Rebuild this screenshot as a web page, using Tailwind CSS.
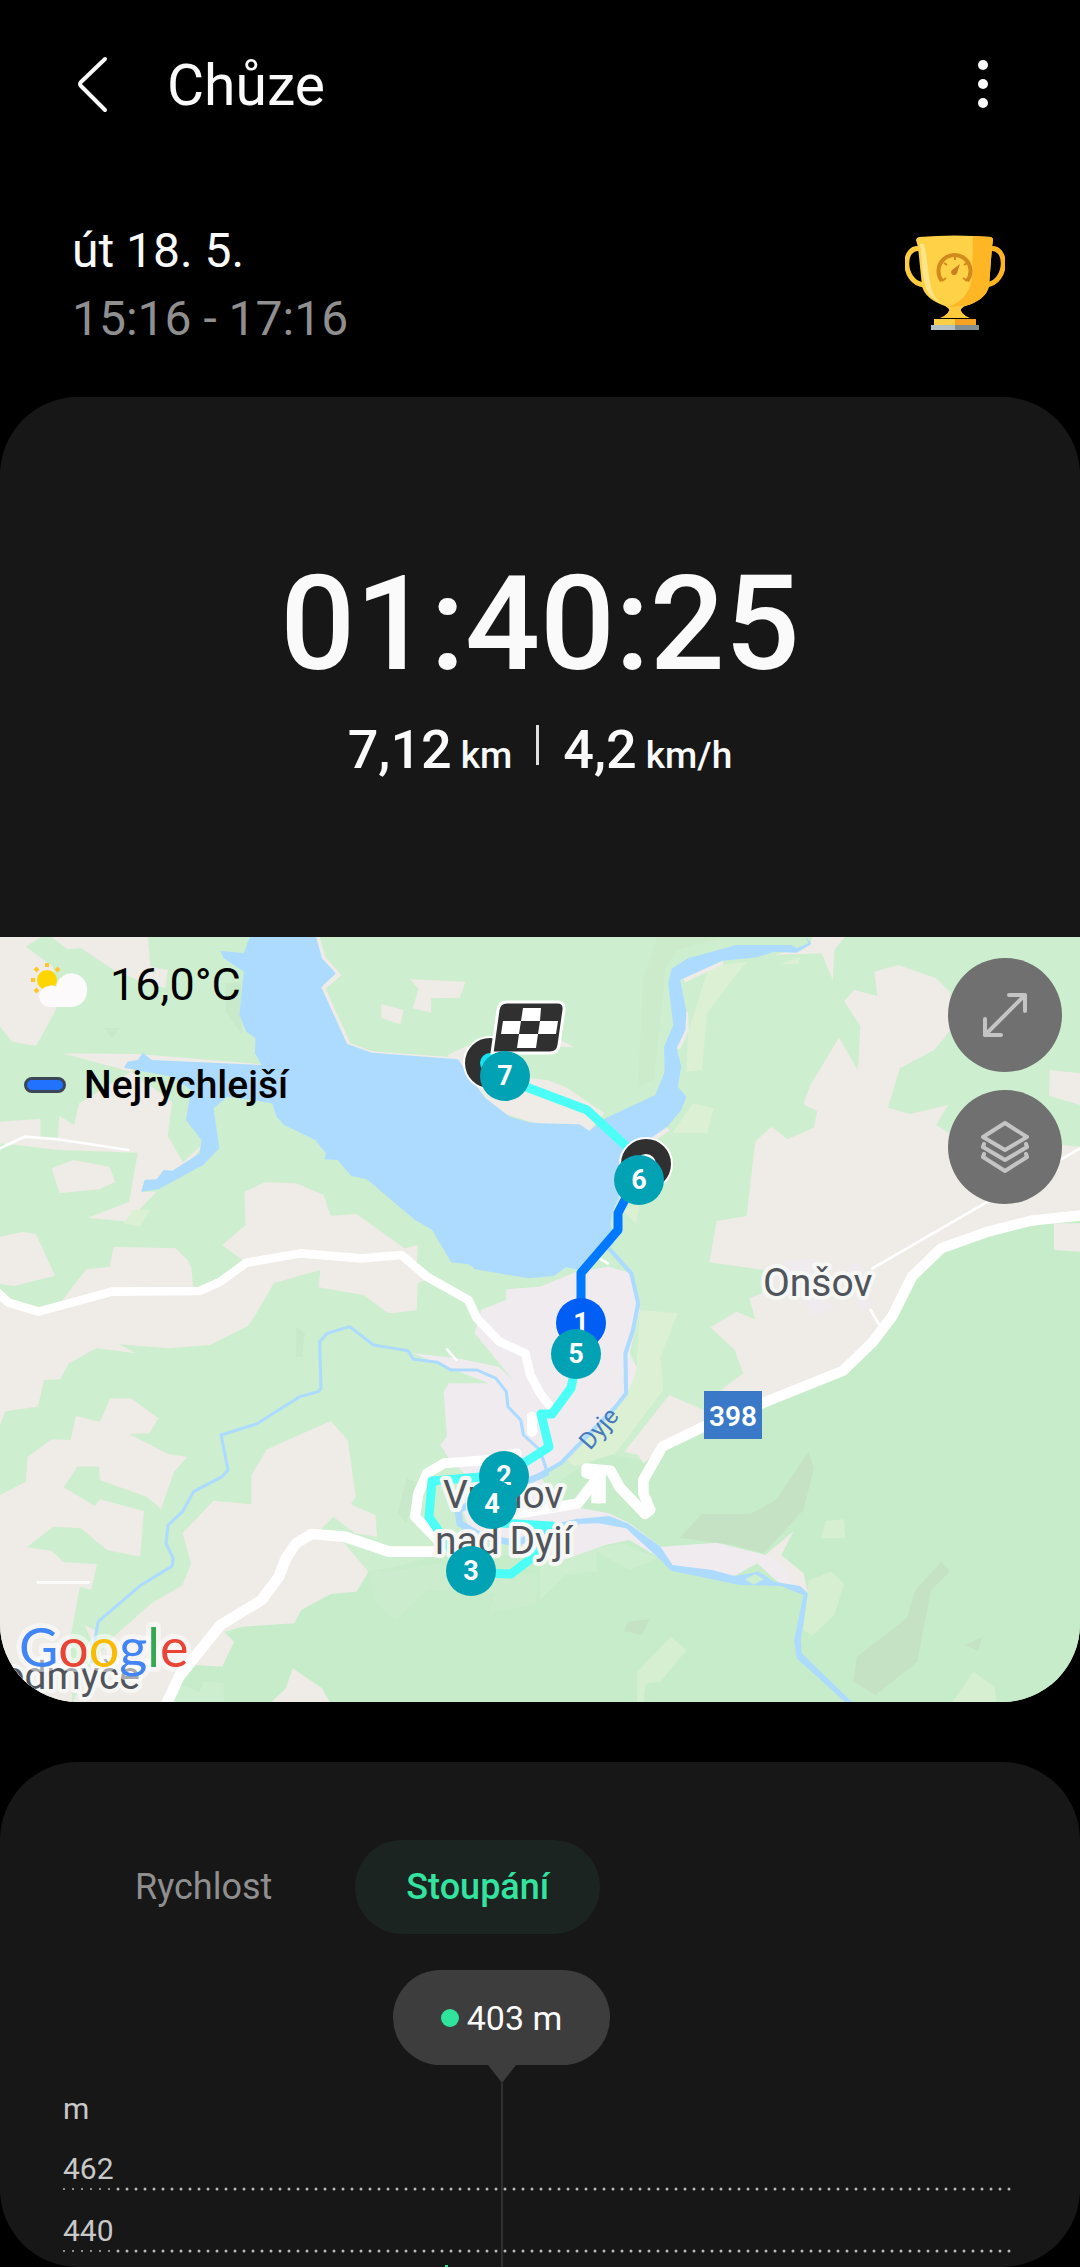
<!DOCTYPE html>
<html lang="cs">

<head>
    <meta charset="UTF-8" />
    <meta name="viewport" content="width=device-width, initial-scale=1.0" />
    <title>Chůze</title>
    <script src="https://cdn.jsdelivr.net/npm/@tailwindcss/browser@4"></script>
</head>

<body class="bg-black text-[#fafafa] font-['Roboto',sans-serif]">
    <!-- Header -->
    <header class="flex items-center h-[168px] pl-[73px] pr-[87px]">
        <button aria-label="Zpět" class="w-10 h-16">
            <svg viewBox="0 0 40 64" class="w-full h-full" fill="none" stroke="#fafafa" stroke-width="4" stroke-linecap="round" stroke-linejoin="round">
                <path d="M32 7 L8 30 Q6 32 8 34 L32 58" />
            </svg>
        </button>
        <h1 class="ml-[54px] pt-1 flex-1 text-[57px] leading-[64px]">Chůze</h1>
        <button aria-label="Další možnosti" class="w-5 h-14 flex flex-col justify-between items-center py-1">
            <span class="w-[10px] h-[10px] rounded-full bg-[#fafafa]"></span>
            <span class="w-[10px] h-[10px] rounded-full bg-[#fafafa]"></span>
            <span class="w-[10px] h-[10px] rounded-full bg-[#fafafa]"></span>
        </button>
    </header>

    <main>
        <!-- Date and award -->
        <section class="flex justify-between items-center h-[229px] pl-[72px] pr-[75px] pt-1">
            <div class="text-[48px] leading-[68px]">
                <p>út 18. 5.</p>
                <p class="text-[#8f8f8f]">15:16 - 17:16</p>
            </div>
            <svg viewBox="0 0 100 98" class="w-[100px] h-[98px] mb-1" aria-label="Pohár">
                <path d="M16 15 C-3 10 -4 48 19 51" fill="none" stroke="#ffcc40" stroke-width="5" />
                <path d="M84 15 C103 10 104 48 81 51" fill="none" stroke="#ffb422" stroke-width="5" />
                <path d="M11 6 Q11 4 14 3 Q50 0 86 3 Q88 4 88 6 L87 13 L84 52 Q81 66 60 72 Q54 75 55 80 H45 Q46 75 40 72 Q20 65 17 52 L13 13 Z" fill="#ffd147" />
                <path d="M68 2 L86 3 Q88 4 88 6 L87 13 L84 52 Q81 66 60 72 L42 73 Q62 68 67 45 Z" fill="#ffb625" />
                <path d="M15 10 C19 35 14 60 36 69 C22 60 25 35 19 10 Z" fill="#ffe58a" />
                <path d="M37 47 A16 16 0 1 1 62 47" fill="none" stroke="#d28a1c" stroke-width="4" />
                <path d="M50 21 V26 M39 29 L42 31 M62 29 L59 31 M37 47 L41 44 M62 47 L58 44" stroke="#d28a1c" stroke-width="2" />
                <path d="M55 30 L52 39 A3 3 0 1 1 47 36 Z" fill="#c97f1f" />
                <path d="M45 73 H55 Q55 80 65 84 H35 Q45 80 45 73 Z" fill="#ffcb3d" />
                <path d="M29 85 H50 V91 H29 Z" fill="#ffcf46" />
                <path d="M50 85 H71 V91 H50 Z" fill="#f8a01f" />
                <path d="M26 91 H50 V96 H26 Z" fill="#b5c1c1" />
                <path d="M50 91 H74 V96 H50 Z" fill="#849090" />
            </svg>
        </section>

        <!-- Summary + map card -->
        <section class="rounded-[78px] overflow-hidden bg-[#171717]">
            <div class="h-[540px] flex flex-col items-center pt-[161px]">
                <p class="text-[132px] leading-[132px] font-medium">01:40:25</p>
                <div class="flex mt-7 font-medium">
                    <p class="text-[54px] leading-[64px]">7,12<span class="text-[37px] ml-[9px]">km</span></p>
                    <span class="w-[3px] h-10 mt-[7px] bg-[#e0e0e0] mx-6"></span>
                    <p class="text-[54px] leading-[64px]">4,2<span class="text-[37px] ml-[9px]">km/h</span></p>
                </div>
            </div>

            <div class="relative">
                <svg viewBox="0 937 1080 765" class="block w-full h-auto font-['Roboto',sans-serif]">
                    <rect y="937" width="1080" height="765" fill="#cdeecf" />

                    <!-- fields and woods, one group per map tile -->
                    <g transform="translate(0 930) scale(.3444 .3333)" fill="#efebe6">
                        <path d="M0 21 H120 L75 50 L155 110 L165 235 L105 348 L35 335 L0 290 Z" />
                        <path d="M150 21 H430 L437 110 L487 120 L480 175 L400 150 L330 120 L235 55 L195 58 Z" />
                        <path d="M180 370 L400 372 L760 403 L700 412 L440 400 L380 425 L500 515 L487 618 L532 697 L590 640 L560 690 L410 785 L455 785 L370 875 L255 863 L375 815 L400 668 L170 660 L0 640 V575 L118 566 V620 L168 625 L172 557 L215 585 L230 520 L380 425 Z" />
                        <path d="M150 715 L213 690 L318 710 L335 755 L290 778 L173 790 Z" />
                        <path d="M0 920 L65 905 L105 913 L160 1037 L40 1068 L0 1062 Z" />
                        <path d="M330 950 L510 955 L545 990 L555 1010 L562 1080 L170 1125 L250 1018 L318 1010 Z" />
                        <path d="M0 1110 L112 1145 L325 1085 L580 1083 L715 998 L645 945 L713 885 L710 785 L770 757 L860 760 L940 795 L960 857 L1035 852 L1175 955 L1213 945 L1210 1010 L1250 1045 L1213 1060 L1210 1140 L1125 1148 L1055 1095 L925 1072 L930 1020 L795 1060 L745 1150 L720 1188 L610 1245 L490 1255 L345 1243 L395 1270 L280 1255 L200 1300 L175 1348 L128 1350 L110 1430 L15 1445 L0 1485 Z" />
                        <path d="M1190 147 L1352 155 L1335 203 L1252 205 V248 L1198 235 L1215 178 Z M1107 222 L1172 240 L1163 283 L1108 265 Z" />
                        <path d="M1300 375 L1355 348 L1450 340 L1568 420 L1620 455 L1755 550 L1711 603 L1568 585 L1400 530 Z" />
                        <path d="M1395 1140 L1470 1110 V1078 L1640 1065 V1300 L1500 1300 Z" />
                        <path d="M1450 340 L1550 350 L1690 400 L1640 470 L1590 450 L1500 440 Z" fill="#cdeecf" />
                        <path d="M360 880 L385 840 L435 840 L405 890 Z" fill="#dcf1d4" />
                        <path d="M303 294 H348 L325 325 Z M655 160 H700 V310 L655 245 Z" fill="#c8eaca" />
                    </g>
                    <g transform="translate(540 930) scale(.3444 .3333)" fill="#efebe6">
                        <path d="M340 21 H530 L400 60 L365 110 L330 450 L285 470 L300 150 Z" fill="#cbebcb" />
                        <path d="M970 125 L1040 105 L1150 145 L1190 185 L1200 290 L1145 360 L1045 415 L1010 533 L1075 552 L1185 525 L1150 585 L1190 610 L1568 650 V860 L1300 915 L1165 965 L1080 1050 L1005 1200 L965 1245 L880 1325 L645 1425 L525 1380 L590 1330 L565 1260 L495 1192 L570 1145 L625 1168 L608 1105 L645 1090 L650 1020 L492 997 L513 873 L600 858 L625 635 L672 590 L718 627 L795 593 L805 543 L765 523 L785 465 L868 323 L923 420 L930 288 L883 213 L912 180 L980 198 Z" />
                        <path d="M785 45 L790 21 H885 L855 60 L850 150 L818 70 L680 75 Z M1480 420 L1568 430 V525 L1478 497 Z M60 330 L100 352 L50 350 Z" />
                        <path d="M490 110 L600 95 L535 180 L485 250 L470 420 L425 425 L430 310 Z M445 520 L505 535 L485 610 L385 608 Z M755 80 L750 103 L695 103 Z M240 840 L290 820 L278 880 Z" fill="#dcf1d4" />
                        <path d="M700 995 L800 985 L820 1110 L860 1130 L790 1160 L760 1110 Z M890 1010 L930 990 L965 1130 L930 1145 Z" fill="#efebef" />
                    </g>
                    <g transform="translate(0 1310) scale(.3444 .3333)" fill="#efebe6">
                        <path d="M530 1110 L560 1065 L700 940 L875 895 L960 852 L1070 785 L1150 770 L1290 730 L1600 740 V1180 H500 Z" fill="#c7ecc9" />
                        <path d="M1070 785 L1150 780 L1280 760 L1600 800 L1568 880 L1420 910 L1440 850 L1240 840 L1150 930 L1090 880 Z" fill="#cdeecf" opacity=".7" />
                        <path d="M0 555 L75 515 L80 440 L150 388 L205 390 L220 318 L290 335 L320 265 H380 L460 325 L435 370 L375 372 L490 433 L545 440 L505 485 L468 597 L425 560 L290 510 L288 470 H225 L185 532 L275 588 L290 568 L418 603 L407 740 L310 720 L235 655 L155 650 L78 712 L150 722 L185 757 L282 762 L265 840 L232 830 L205 980 L210 1180 H0 Z" />
                        <path d="M960 333 L1010 390 L1033 560 L1018 583 L1090 615 L1095 680 L1030 670 L968 620 L930 660 L1000 700 L1070 785 L1035 845 L960 852 L875 900 L855 940 L705 950 L650 965 L680 995 L645 1070 L560 1065 L520 1120 L490 1180 H210 L265 1060 L330 980 L440 880 L530 825 L555 760 L530 670 L620 572 L730 583 V495 L775 418 Z" />
                        <path d="M850 1075 L935 1135 L960 1180 H785 L830 1135 Z M245 945 L275 960 L270 1000 Z" />
                        <path d="M515 1120 L580 1145 L590 1115 L650 1118 V1180 H500 Z" fill="#cdeecf" />
                        <path d="M860 50 L885 70 L878 140 L860 140 Z M1180 505 L1215 520 L1180 640 L1155 610 Z" fill="#c8eaca" />
                        <path d="M1110 0 H1210 L1140 10 Z" />
                    </g>
                    <g transform="translate(540 1310) scale(.3444 .3333)" fill="#efebe6">
                        <path d="M1568 -280 L1300 -225 L1170 -175 L1075 -90 L1035 0 L965 110 L880 190 L645 290 L360 420 L290 450 L180 430 L90 490 L0 560 L-10 760 V1180 H1568 Z" fill="#c7ecc9" />
                        <path d="M0 745 L240 700 L340 745 L260 780 L165 725 V785 L75 795 L0 870 Z" fill="#cdeecf" />
                        <path d="M1492 -260 H1568 V-175 L1492 -180 Z" />
                        <path d="M375 255 L475 300 V350 L350 420 L300 460 L285 435 L245 425 Z" />
                        <path d="M0 -70 L-98 -62 V-30 L-170 0 L-190 70 L-75 215 L-120 170 L-240 145 L-370 130 L-150 220 H-265 L-280 245 L-270 380 L-290 405 L-265 445 L-100 610 L60 610 L0 495 L80 450 L250 260 L285 180 L260 130 L290 0 L265 -110 L200 -130 L105 -115 Z" fill="#efebef" />
                        <path d="M-240 560 L100 590 L200 610 L260 640 L350 710 L515 698 L655 735 L735 665 L700 735 L765 790 L778 850 L690 815 L630 760 L565 798 L385 768 L260 690 L190 705 L40 760 L-60 700 L-200 670 Z" fill="#efebef" />
                        <path d="M655 735 L735 665 L700 735 L765 790 L778 850 L740 825 L700 760 Z" />
                        <path d="M290 0 L400 10 L350 140 L358 240 L220 430 L100 470 L80 450 L200 320 L255 255 L280 180 Z" fill="#dcf1d4" />
                        <path d="M780 425 L795 475 L765 600 L650 730 L560 705 L405 683 L470 612 H610 L685 570 Z M1165 755 L1190 785 L1135 840 L1095 1055 L975 1155 L910 1115 L920 1040 L1065 925 L1090 840 Z M255 935 L318 928 L295 975 L245 963 Z M1235 1005 L1283 982 L1272 1022 Z" fill="#c5e2c5" />
                        <path d="M845 785 L883 820 L855 915 L790 977 L765 960 L780 810 Z M830 632 L882 628 L887 685 H815 Z M380 980 L425 1020 L350 1115 L308 1120 L300 1180 H282 V1085 Z M1258 1085 L1320 1130 L1325 1180 H1195 Z" fill="#d5efd0" />
                        <path d="M100 628 L200 618 L255 640 L350 710 L385 765 L500 780 L565 798 L635 785 L680 815 L755 828 L778 850 L757 990 L760 1030 L910 1180 H890 L745 1045 L738 990 L765 855 L700 828 L580 825 L380 782 L340 740 L250 655 L170 640 L100 642 Z" fill="#addbff" />
                        <path d="M595 808 L625 792 L650 808 L620 824 Z" fill="#cdeecf" />
                    </g>

                    <!-- reservoir -->
                    <g transform="translate(0 930) scale(.3444 .3333)">
                        <path d="M921 21 L938 83 L982 135 L937 174 L1012 345 L1080 371 L1335 390" fill="none" stroke="#efebe6" stroke-width="14" />
                        <path d="M1985 150 L2098 95 M1990 245 L1992 300 L1968 355 M1870 645 L1940 595" fill="none" stroke="#efebe6" stroke-width="16" />
                        <path fill="#addbff" d="M725 21 L708 70 L640 62 L650 85 L708 125 L695 255 L715 305 L742 325 L740 370 L760 405 L440 390 L415 368 L400 390 L370 395 L360 413 L500 440 L555 480 L540 570 L585 630 L580 670 L500 722 L475 720 L455 748 L420 750 L410 785 L460 778 L590 705 L637 655 L620 535 L660 500 L790 520 L803 560 L825 585 L915 630 L947 670 L942 688 L980 690 L1020 738 L1065 748 L1205 870 L1255 900 L1310 997 L1360 1003 L1380 1018 L1535 1045 L1608 1038 L1643 1012 L1683 1020 L1768 955 L1783 940 L1773 880 L1780 840 L1868 640 L1938 590 L1978 540 L1993 500 L1968 470 L1978 410 L1965 355 L1990 300 L1993 245 L1975 150 L2098 92 L2198 82 L2248 65 L2313 68 L2356 42 L2338 18 L2348 40 L2313 55 L2298 45 L2138 45 L1998 85 L1951 115 L1940 160 L1955 285 L1928 350 L1930 425 L1903 495 L1758 565 L1711 603 L1683 583 L1568 580 L1535 577 L1480 560 L1410 505 L1370 450 L1330 388 L1080 368 L1008 342 L933 172 L975 130 L935 85 L918 21 Z" />
                    </g>
                    <!-- streams -->
                    <g transform="translate(0 1310) scale(.3444 .3333)" fill="none" stroke="#addbff" stroke-linejoin="round">
                        <path stroke-width="9" d="M265 1060 L285 935 L410 825 L500 768 L503 745 L482 700 L488 645 L530 605 L562 545 L645 500 L662 480 L642 375 L745 342 L870 260 L925 245 L932 235 L928 95 L950 70 L1015 50 L1085 105 L1185 122 L1200 148 L1270 157 L1310 180 L1385 180 L1440 205 L1470 245 L1475 290 L1512 330 L1520 375 L1568 420 L1590 490" />
                        <path stroke-width="12" d="M1768 -185 L1833 -110 L1853 -20 L1838 60 L1816 130 L1818 250 L1788 290 L1628 460 L1568 495" />
                        <path stroke-width="20" d="M1590 485 L1568 498 L1440 550 L1330 600 L1335 640 L1400 680 L1500 700 L1600 655 L1680 635" />
                    </g>

                    <!-- roads -->
                    <g transform="translate(0 1310) scale(.3444 .3333)" fill="none" stroke="#ffffff" stroke-width="26" stroke-linejoin="round" stroke-linecap="round">
                        <path d="M-10 -55 L25 -22 L112 5 L325 -55 L580 -57 L640 -85 L715 -142 L875 -170 L1050 -155 L1165 -165 L1240 -100 L1360 -30 L1385 25 L1450 95 L1525 130 L1540 195 L1568 250 L1598 290" />
                        <path stroke-width="32" d="M480 1190 L520 1100 L640 945 L760 870 L810 800 L830 745 L860 700 L905 672 L1000 680 L1130 725 L1270 725" />
                        <path stroke-width="30" d="M1290 710 L1205 620 L1215 550 L1240 490 L1290 460 L1420 450 L1500 430 M1545 320 V365" />
                        <path stroke-width="31" d="M3150 -285 L2993 -268 L2868 -235 L2733 -185 L2648 -100 L2590 20 L2533 97 L2448 182 L2213 280 L2043 350 L1923 410 L1868 510 V550 L1888 600 L1873 612 L1798 530 L1773 482 L1703 475 V490 L1738 500 V565 M1738 500 L1678 580 L1568 600 L1480 615" />
                        <path stroke-width="42" stroke-linecap="butt" d="M1738 480 V580" />
                        <path stroke-width="8" d="M0 -485 L72 -520 L170 -512 L372 -480 M3136 -485 L2868 -325 L2533 -125 M2528 0 L2553 45 M110 817 H257 M1298 118 L1325 150 M1740 -155 L1765 -140" />
                    </g>

                    <!-- recorded route -->
                    <g fill="none" stroke-width="9" stroke-linejoin="round">
                        <path stroke="#4bfff6" d="M505 1079 L587 1110 L640 1159" />
                        <path stroke="#4bfff6" d="M583 1300 V1330 L571 1388 L552 1414 H541 L549 1447 L505 1475 L432 1481 L429 1517 L447 1543 L462 1572 L511 1574 L533 1557 L552 1526 L500 1523" />
                        <path stroke="#0078ff" d="M630 1190 L618 1213 V1230 L581 1273 V1310" />
                    </g>

                    <!-- place names -->
                    <g fill="#50555c" stroke="#f6f7f4" stroke-width="8" stroke-linejoin="round" paint-order="stroke" font-size="39">
                        <text x="763" y="1296">Onšov</text>
                        <text x="443" y="1508">Vranov</text>
                        <text x="435" y="1554">nad Dyjí</text>
                        <text x="140" y="1689" text-anchor="end">Podmyče</text>
                    </g>
                    <text transform="translate(590 1451) rotate(-49)" font-size="24" fill="#4679bb">Dyje</text>
                    <rect x="704" y="1391" width="58" height="48" fill="#3a78c8" />
                    <text x="733" y="1426" font-size="28" font-weight="600" fill="#fff" text-anchor="middle">398</text>

                    <!-- start and finish -->
                    <circle cx="490" cy="1063" r="26" fill="#303030" stroke="#fff" stroke-width="2" />
                    <circle cx="490" cy="1063" r="10" fill="#16e3f0" />
                    <circle cx="646" cy="1164" r="26" fill="#303030" stroke="#fff" stroke-width="2" />
                    <circle cx="646" cy="1164" r="10" fill="#fff" />
                    <path d="M507 1002 H557 Q565 1002 564 1010 L559 1045 Q558 1053 550 1053 H492 L498 1010 Q499 1002 507 1002 Z" fill="#303030" stroke="#fff" stroke-width="3" />
                    <path d="M523 1008 H541 L540 1021 H521 Z M503 1021 H521 L519 1034 H501 Z M540 1021 H558 L556 1034 H538 Z M519 1034 H538 L536 1048 H517 Z" fill="#fff" />

                    <!-- kilometre markers -->
                    <g font-size="27" font-weight="700" text-anchor="middle">
                        <circle cx="581" cy="1323" r="25" fill="#005ef5" />
                        <text x="581" y="1332" fill="#fff">1</text>
                        <g fill="#00a2b4">
                            <circle cx="504" cy="1476" r="25" />
                            <text x="504" y="1485" fill="#fff">2</text>
                            <circle cx="471" cy="1571" r="25" />
                            <circle cx="492" cy="1504" r="25" />
                            <circle cx="576" cy="1354" r="25" />
                            <circle cx="639" cy="1180" r="25" />
                            <circle cx="505" cy="1076" r="25" />
                        </g>
                        <g fill="#fff">
                            <text x="471" y="1580">3</text>
                            <text x="492" y="1513">4</text>
                            <text x="576" y="1363">5</text>
                            <text x="639" y="1189">6</text>
                            <text x="505" y="1085">7</text>
                        </g>
                    </g>

                    <text x="19" y="1667" font-size="54" font-family="Lato, sans-serif" font-weight="400" stroke="#ffffff" stroke-opacity=".5" stroke-width="10" stroke-linejoin="round" paint-order="stroke"><tspan fill="#4285f4">G</tspan><tspan fill="#e94435">o</tspan><tspan fill="#fabb05">o</tspan><tspan fill="#4285f4">g</tspan><tspan fill="#34a853">l</tspan><tspan fill="#e94435">e</tspan></text>
                </svg>

                <!-- weather and legend -->
                <div class="absolute left-6 top-5 text-black">
                    <div class="flex items-center h-14">
                        <svg viewBox="0 0 64 52" class="w-16 h-[52px]">
                            <g stroke="#ffc629" stroke-width="4">
                                <path d="M23 4 V8 M7 21 H11 M11 9 L14 12 M35 9 L32 12 M11 33 L14 30" />
                            </g>
                            <circle cx="23" cy="21" r="10" fill="#ffd500" />
                            <path d="M26 48 A10 10 0 0 1 25 27 Q29 25 32 28 A15 15 0 0 1 63 32 A16 16 0 0 1 48 48 Z" fill="#fcfafa" />
                        </svg>
                        <span class="ml-[22px] text-[45px] leading-[52px]">16,0°C</span>
                    </div>
                    <div class="flex items-center mt-12 text-[39px] leading-[48px] font-medium">
                        <span class="w-[42px] h-4 rounded-full bg-[#2173ff] border-[3px] border-[#3b4656]"></span>
                        <span class="ml-[18px]">Nejrychlejší</span>
                    </div>
                </div>

                <!-- map controls -->
                <div class="absolute right-[18px] top-[21px] flex flex-col gap-[18px]">
                    <button aria-label="Zvětšit mapu" class="w-[114px] h-[114px] rounded-full bg-[#707070]">
                        <svg viewBox="0 0 114 114" class="w-full h-full" fill="none" stroke="#c4c4c4" stroke-width="4" stroke-linecap="round" stroke-linejoin="round">
                            <path d="M61 37 H77 V53 M77 37 L37 77 M37 61 V77 H53" />
                        </svg>
                    </button>
                    <button aria-label="Vrstvy mapy" class="w-[114px] h-[114px] rounded-full bg-[#707070]">
                        <svg viewBox="0 0 114 114" class="w-full h-full" fill="none" stroke="#c4c4c4" stroke-width="4" stroke-linecap="round" stroke-linejoin="round">
                            <path d="M57 33 L79 47 L57 60 L35 47 Z" />
                            <path d="M36 54 L35 57 L57 70 L79 57 L78 54" />
                            <path d="M36 64 L35 67 L57 81 L79 67 L78 64" />
                        </svg>
                    </button>
                </div>
            </div>
        </section>

        <!-- Chart card -->
        <section class="mt-[60px] rounded-[78px] overflow-hidden bg-[#171717] pt-[78px]">
            <div class="flex items-center pl-[84px] text-[36px] leading-[94px]">
                <button class="px-[51px] text-[#8f8f8f]">Rychlost</button>
                <button class="ml-8 px-[51px] rounded-full bg-[#1b2421] text-[#34e39f] font-medium">Stoupání</button>
            </div>

            <div class="relative h-[297px] mt-9 px-[63px] pt-[121px] text-[30px] leading-9 text-[#c8c8c8]">
                <p>m</p>
                <p class="mt-6">462</p>
                <svg class="block w-full h-1" stroke="#b8b8b8" stroke-linecap="round" stroke-dasharray="0 9">
                    <line x1="1" y1="2" x2="50" y2="2" stroke-width="2" />
                    <line x1="55" y1="2" x2="100%" y2="2" stroke-width="3" />
                </svg>
                <p class="mt-[22px]">440</p>
                <svg class="block w-full h-1" stroke="#b8b8b8" stroke-linecap="round" stroke-dasharray="0 9">
                    <line x1="1" y1="2" x2="50" y2="2" stroke-width="2" />
                    <line x1="55" y1="2" x2="100%" y2="2" stroke-width="3" />
                </svg>

                <!-- selected value -->
                <div class="absolute left-[393px] top-0 bottom-0 w-[217px] flex flex-col items-center">
                    <div class="w-full h-[95px] shrink-0 rounded-full bg-[#3d3d3d] flex items-center justify-center gap-2 text-[34px] text-[#fafafa]">
                        <span class="w-[18px] h-[18px] rounded-full bg-[#2fe59b]"></span>403 m
                    </div>
                    <svg viewBox="0 0 28 18" class="w-7 h-[18px] shrink-0"><path d="M0 0 H28 L14 18 Z" fill="#3d3d3d" /></svg>
                    <span class="w-[2px] flex-1 bg-[#303030]"></span>
                </div>
                <span class="absolute left-[445px] bottom-0 w-[3px] h-[2px] bg-[#2fe59b]"></span>
            </div>
        </section>
    </main>
</body>

</html>
